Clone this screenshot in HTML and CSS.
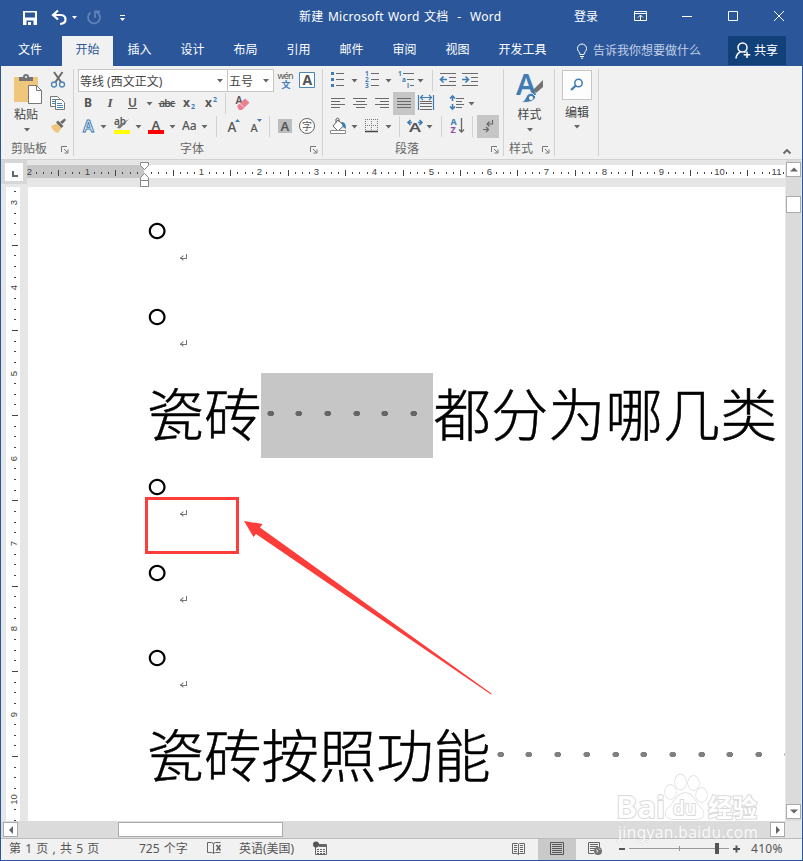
FILE: index.html
```html
<!DOCTYPE html>
<html lang="zh-CN">
<head>
    <meta charset="UTF-8">
    <meta name="viewport" content="width=device-width, initial-scale=1.0">
    <title>新建 Microsoft Word 文档 - Word</title>
    <link rel="stylesheet" href="styles.css">
</head>
<body>
<div class="window">

    <!-- Title bar -->
    <header class="titlebar">
        <svg class="quick" viewBox="1 0 140 36" width="140" height="36">
            <path d="M23 11h14v14H23z" fill="#fff"/>
            <path d="M25 12.500h10v5H25z M26.500 20.500h7V25h-7z" fill="#2b579a"/>
            <path d="M28 22h3v3h-3z" fill="#fff"/>
            <path d="M58 10.500l-5 4.500 5 4.500M53.500 15h7.500q4.500 .5 4.500 4.500t-5.500 4.500" fill="none" stroke="#fff" stroke-width="2.200"/>
            <path d="M72 16h5l-2.500 3z" fill="#fff"/>
            <path d="M90.500 12.500a6 6 0 1 0 5.500-.8M95 18v-6.500h5" fill="none" stroke="#5f82b8" stroke-width="1.800"/>
            <path d="M120 15.500h5" stroke="#fff"/>
            <path d="M120 18h5l-2.500 3z" fill="#fff"/>
        </svg>
        <h1 class="title">新建 Microsoft Word 文档&nbsp; -&nbsp; Word</h1>
        <span class="login">登录</span>
        <svg class="winbtns" viewBox="622 0 180 36" width="180" height="36" fill="none" stroke="#fff">
            <path d="M634.500 11.500h12v9h-12zM634.500 13.500h12M640.500 20v-5M638 17.500l2.500-2.500 2.500 2.500"/>
            <path d="M682 16.500h10"/>
            <path d="M728.500 11.500h9v9h-9z"/>
            <path d="M774 11l10 10M784 11l-10 10"/>
        </svg>
    </header>

    <!-- Ribbon tabs -->
    <nav class="tabs">
        <span class="tab file">文件</span>
        <span class="tab active">开始</span>
        <span class="tab">插入</span>
        <span class="tab">设计</span>
        <span class="tab">布局</span>
        <span class="tab">引用</span>
        <span class="tab">邮件</span>
        <span class="tab">审阅</span>
        <span class="tab">视图</span>
        <span class="tab wide">开发工具</span>
        <span class="tellme">
            <svg viewBox="0 0 12 16" width="12" height="16" fill="none" stroke="#fff"><path d="M4 11.500C4 9 1.500 8.500 1.500 5.500a4.500 4.500 0 0 1 9 0C10.500 8.500 8 9 8 11.500zM4 13.500h4M5 15.200h2"/></svg>
            告诉我你想要做什么
        </span>
        <span class="share">
            <svg viewBox="0 0 16 17" width="16" height="17" fill="none" stroke="#fff" stroke-width="1.500"><circle cx="7.500" cy="5.500" r="4.500"/><path d="M1 16.500q.5-5 4.500-6.500M9.500 10l1 .7M12 9.500v6.500M8.700 12.700h6.600"/></svg>
            共享
        </span>
    </nav>

    <!-- Ribbon -->
    <section class="ribbon">
        <div class="group clipboard">
            <div class="tools">
                <div class="big">
                    <svg viewBox="5 69 43 36" width="43" height="36">
                        <path d="M14 77h24v25H14z" fill="#eec77d"/>
                        <path d="M19 81v-4h4q0-3 3-3t3 3h4v4z" fill="#737373"/><circle cx="26" cy="77" r="1" fill="#fff"/>
                        <path d="M28.500 85.500h8l5 5v13h-13z" fill="#fff" stroke="#777"/><path d="M36.500 85.500v5h5" fill="none" stroke="#777"/>
                    </svg>
                    <span>粘贴</span>
                    <svg viewBox="0 0 6 4" width="6" height="4"><path class="arr" d="M0 0h6l-3 3.500z"/></svg>
                </div>
                <div class="col">
                    <svg viewBox="48 69 20 23" width="20" height="23" fill="none">
                        <path d="M54 72l7 10M62.500 72l-7 10" stroke="#6a6a6a" stroke-width="2"/>
                        <circle cx="54" cy="84.500" r="2.500" stroke="#4c85b8" stroke-width="1.300"/><circle cx="62" cy="84.500" r="2.500" stroke="#4c85b8" stroke-width="1.300"/>
                    </svg>
                    <svg viewBox="48 92 20 23" width="20" height="23" fill="#fff" stroke="#777">
                        <path d="M50.500 96.500h7l2 2v8h-9z"/><path d="M52 99.500h4M52 101.500h4M52 103.500h4" stroke="#4c85b8"/>
                        <path d="M55.500 99.500h6l3 3v7h-9z"/><path d="M57 103.500h5M57 105.500h6M57 107.500h6" stroke="#4c85b8"/>
                    </svg>
                    <svg viewBox="48 115 20 23" width="20" height="23">
                        <path d="M51 126l6-2.500 4.500 4.500-3.500 5q-5-1-7-7z" fill="#eec77d"/>
                        <path d="M56 122.500l2-2 5.500 5.500-2 2zM60 122l4.500-3.500 1.500 1.500-3.500 4z" fill="#6a6a6a"/>
                    </svg>
                </div>
            </div>
            <div class="caption"><span>剪贴板</span><svg class="launch" viewBox="0 0 8 8"><path d="M.5 6V.500H6M3 3l3.500 3.500M7 3.500V7H3.500"/></svg></div>
        </div>

        <div class="group font">
            <div class="tools rows">
                <div class="row">
                    <span class="combo name">等线 (西文正文)<svg viewBox="0 0 6 4" width="6" height="4"><path class="arr" d="M0 0h6l-3 3.500z"/></svg></span>
                    <span class="combo size">五号<svg viewBox="0 0 6 4" width="6" height="4"><path class="arr" d="M0 0h6l-3 3.500z"/></svg></span>
                    <svg viewBox="274 69 48 23" width="48" height="23">
                        <text x="277.500" y="79" font-size="9" textLength="16" class="dk">wén</text>
                        <text x="281.500" y="87.500" font-size="9" font-weight="700" fill="#3f7cb4">文</text>
                        <path d="M299.500 72.500h15v15h-15z" fill="#fff" stroke="#4c85b8"/>
                        <text x="302.500" y="85" font-size="14" font-weight="700" class="dk">A</text>
                    </svg>
                </div>
                <div class="row">
                    <svg viewBox="78 92 80 23" width="80" height="23">
                        <text x="84" y="107" font-size="12" font-weight="700" class="dk">B</text>
                        <text x="107.500" y="107" font-size="13" font-style="italic" font-weight="700" class="dk serif">I</text>
                        <text x="128" y="107" font-size="12" font-weight="600" class="dk">U</text><path d="M128 108.500h9" stroke="#555"/>
                        <path class="arr" d="M146.500 102h6l-3 3.500z"/>
                    </svg>
                    <svg viewBox="158 92 66 23" width="66" height="23">
                        <text x="159" y="107" font-size="10.500" font-weight="600" textLength="16" class="dk">abc</text><path d="M158.500 103.500h17" stroke="#555"/>
                        <text x="183" y="107" font-size="12" font-weight="700" class="dk">x</text><text x="191" y="109" font-size="7" font-weight="700" fill="#3f7cb4">2</text>
                        <text x="205" y="107" font-size="12" font-weight="700" class="dk">x</text><text x="213" y="102" font-size="7" font-weight="700" fill="#3f7cb4">2</text>
                    </svg>
                    <i class="sep"></i>
                    <svg viewBox="227 92 30 23" width="30" height="23">
                        <text x="235.500" y="104" font-size="10.500" font-weight="600" class="dk">A</text>
                        <path d="M237 106l8-7.500 4.500 4-7.500 7.500h-3z" fill="#e8808e"/><path d="M239.500 103l4.500 4.500" stroke="#f8d5da"/>
                    </svg>
                </div>
                <div class="row">
                    <svg viewBox="78 115 137 23" width="137" height="23">
                        <text x="83" y="131.500" font-size="16" font-weight="600" fill="#fff" stroke="#3f7cb4" stroke-width="1">A</text>
                        <path class="arr" d="M100.500 125h6l-3 3.500z"/>
                        <text x="114" y="125" font-size="10" font-weight="600" class="dk">ab</text>
                        <path d="M129 119l-9 9.500-3-.5 1.500-2.500z" fill="#777"/><path d="M114 130h16v4h-16z" fill="#ff0"/>
                        <path class="arr" d="M135.500 125h6l-3 3.500z"/>
                        <text x="151.500" y="129.500" font-size="13" font-weight="600" class="dk">A</text><path d="M148 130h16v4h-16z" fill="red"/>
                        <path class="arr" d="M169.500 125h6l-3 3.500z"/>
                        <text x="182" y="130" font-size="12" font-weight="500" class="dk">Aa</text>
                        <path class="arr" d="M201.500 125h6l-3 3.500z"/>
                    </svg>
                    <i class="sep"></i>
                    <svg viewBox="218 115 50 23" width="50" height="23">
                        <text x="227.500" y="132" font-size="13.500" font-weight="500" class="dk">A</text><path d="M235 122h5l-2.500-3z" fill="#3f7cb4"/>
                        <text x="250.500" y="132" font-size="11" font-weight="500" class="dk">A</text><path d="M257 119h5l-2.500 3z" fill="#3f7cb4"/>
                    </svg>
                    <i class="sep"></i>
                    <svg viewBox="271 115 50 23" width="50" height="23">
                        <path d="M278 119h14v14h-14z" fill="#bdbdbd"/>
                        <text x="280.500" y="131" font-size="13" font-weight="600" class="dk">A</text>
                        <circle cx="307" cy="126" r="7.500" fill="#fff" stroke="#666"/>
                        <text x="302" y="130" font-size="10" class="dk">字</text>
                    </svg>
                </div>
            </div>
            <div class="caption"><span>字体</span><svg class="launch" viewBox="0 0 8 8"><path d="M.5 6V.500H6M3 3l3.500 3.500M7 3.500V7H3.500"/></svg></div>
        </div>

        <div class="group para">
            <div class="tools rows">
                <div class="row">
                    <svg viewBox="327 69 104 23" width="104" height="23">
                        <path d="M331 72h3v3h-3zM331 78h3v3h-3zM331 84h3v3h-3z" fill="#3f7cb4"/>
                        <path class="ln" d="M336 73.500h8M336 79.500h8M336 85.500h8"/>
                        <path class="arr" d="M351.500 79h6l-3 3.500z"/>
                        <g font-size="6.500" font-weight="700" fill="#3f7cb4"><text x="365" y="76">1</text><text x="365" y="82">2</text><text x="365" y="88">3</text></g>
                        <path class="ln" d="M371 73.500h8M371 79.500h8M371 85.500h8"/>
                        <path class="arr" d="M385.500 79h6l-3 3.500z"/>
                        <g font-size="6.500" font-weight="700" fill="#3f7cb4"><text x="398" y="76">1</text><text x="402" y="82">a</text><text x="407" y="88">i</text></g>
                        <path class="ln" d="M403 73.500h11M407 79.500h7M410 85.500h4"/>
                        <path class="arr" d="M417.500 79h6l-3 3.500z"/>
                    </svg>
                    <i class="sep"></i>
                    <svg viewBox="434 69 50 23" width="50" height="23">
                        <path class="ln" d="M440 73.500h16M449 77.500h7M449 81.500h7M440 85.500h16M462 73.500h16M471 77.500h7M471 81.500h7M462 85.500h16"/>
                        <path class="bl" d="M447 79.500h-6M443.500 76.500l-3 3 3 3M462 79.500h6M465.500 76.500l3 3-3 3"/>
                    </svg>
                </div>
                <div class="row">
                    <svg viewBox="327 92 66 23" width="66" height="23">
                        <path class="ln" d="M331 98.500h14M331 101.500h9M331 104.500h14M331 107.500h9M353 98.500h14M356 101.500h9M353 104.500h14M356 107.500h9M375 98.500h14M380 101.500h9M375 104.500h14M380 107.500h9"/>
                    </svg>
                    <svg class="on" viewBox="393 92 22 23" width="22" height="23"><path class="ln" d="M397 98.500h14M397 101.500h14M397 104.500h14M397 107.500h14"/></svg>
                    <svg viewBox="415 92 66 23" width="66" height="23">
                        <path class="bl thin" d="M418.500 95v15M433.500 95v15M420 97.500h12M423 95l-2.500 2.500 2.500 2.500M429 95l2.500 2.500-2.500 2.500"/>
                        <path class="ln" d="M420 101.500h12M420 103.500h12M420 106.500h12M420 109.500h12"/>
                        <path class="bl" d="M452.500 96v5M452.500 104v5M450 98.500l2.500-2.500 2.500 2.500M450 106.500l2.500 2.500 2.500-2.500"/>
                        <path class="ln" d="M456 98.500h8M456 101.500h6M456 104.500h8M456 107.500h6"/>
                        <path class="arr" d="M468.500 102h6l-3 3.500z"/>
                    </svg>
                </div>
                <div class="row">
                    <svg viewBox="327 115 71 23" width="71" height="23">
                        <path d="M333 126l5-6 6 5.500-6 5.500z" fill="#fff" stroke="#666"/><path d="M336 123v-4q2-2 3 0v3" fill="none" stroke="#666"/>
                        <path d="M341 122q5-1 5 7l-3-2z" fill="#3f7cb4"/><path d="M330.500 130.500h15v3h-15z" fill="#fff" stroke="#888"/>
                        <path class="arr" d="M351.500 125h6l-3 3.500z"/>
                        <path d="M365.500 119v12M371.500 119v12M377.500 119v12M365 119.500h13M365 125.500h13" stroke="#777" stroke-dasharray="1 1"/><path d="M365 131.500h13" stroke="#444" stroke-width="1.500"/>
                        <path class="arr" d="M385.500 125h6l-3 3.500z"/>
                    </svg>
                    <i class="sep"></i>
                    <svg viewBox="401 115 39 23" width="39" height="23">
                        <text x="409" y="132" font-size="13" font-weight="600" textLength="12" lengthAdjust="spacingAndGlyphs" class="dk">A</text>
                        <path class="bl" d="M412 122.500h-4M410.500 120l-2.500 2.500 2.500 2.500M418 122.500h4M419.500 120l2.500 2.500-2.500 2.500"/>
                        <path class="arr" d="M426.500 125h6l-3 3.500z"/>
                    </svg>
                    <i class="sep"></i>
                    <svg viewBox="443 115 28 23" width="28" height="23">
                        <text x="450.500" y="125" font-size="9" font-weight="700" fill="#3f7cb4">A</text>
                        <text x="450.500" y="133" font-size="9" font-weight="700" fill="#8e4ba8">Z</text>
                        <path d="M461.500 118v14M459 129.500l2.500 2.500 2.500-2.500" fill="none" stroke="#666" stroke-width="1.300"/>
                    </svg>
                    <i class="sep"></i>
                    <svg class="on" viewBox="477 115 22 23" width="22" height="23"><path d="M492.500 120v4h-5M489.500 121.500l-2.500 2.500 2.500 2.500M483 129.500h5M486 127l2.500 2.500-2.500 2.500" fill="none" stroke="#666" stroke-width="1.200"/></svg>
                </div>
            </div>
            <div class="caption"><span>段落</span><svg class="launch" viewBox="0 0 8 8"><path d="M.5 6V.500H6M3 3l3.500 3.500M7 3.500V7H3.500"/></svg></div>
        </div>

        <div class="group styles">
            <div class="tools">
                <div class="big">
                    <svg viewBox="508 69 43 36" width="43" height="36">
                        <text x="516" y="95" font-size="29" font-weight="600" fill="#3f7cb4" textLength="20" lengthAdjust="spacingAndGlyphs">A</text>
                        <path d="M543 80v7l-7 6-3-3z" fill="#737373"/><path d="M521 102q4-1 5-5t6-4l4 4q-3 7-15 5z" fill="#3f7cb4" stroke="#f1f1f1"/><circle cx="531" cy="98" r="2" fill="#fff"/>
                    </svg>
                    <span>样式</span>
                    <svg viewBox="0 0 6 4" width="6" height="4"><path class="arr" d="M0 0h6l-3 3.500z"/></svg>
                </div>
            </div>
            <div class="caption"><span>样式</span><svg class="launch" viewBox="0 0 8 8"><path d="M.5 6V.500H6M3 3l3.500 3.500M7 3.500V7H3.500"/></svg></div>
        </div>

        <div class="group edit">
            <div class="big">
                <span class="editbox"><svg viewBox="0 0 14 14" width="14" height="14" fill="none" stroke="#3f7cb4"><circle cx="8.500" cy="5" r="3.700" stroke-width="1.500"/><path d="M6 7.500l-5 4.500" stroke-width="2.300"/></svg></span>
                <span>编辑</span>
                <svg viewBox="0 0 6 4" width="6" height="4"><path class="arr" d="M0 0h6l-3 3.500z"/></svg>
            </div>
        </div>
        <svg class="collapse" viewBox="0 0 10 7" width="10" height="7"><path d="M1.500 5.500L5 2l3.500 3.500" fill="none" stroke="#666" stroke-width="1.800"/></svg>
    </section>

    <!-- Document area -->
    <main class="work">
        <div class="left">
            <div class="top">
                <div class="corner"><span class="tabstop"></span></div>
                <svg id="hruler" viewBox="27 160 758 27" width="758" height="27"></svg>
            </div>
            <div class="middle">
                <svg id="vruler" viewBox="1 187 27 634" width="27" height="634"></svg>
                <article class="page">
                    <p class="line stop">。<i class="ret"></i></p>
                    <p class="line stop">。<i class="ret"></i></p>
                    <p class="line">瓷砖<span class="sel"><i class="sp"></i><i class="sp"></i><i class="sp"></i><i class="sp"></i><i class="sp"></i><i class="sp"></i></span><span class="after">都分为哪几类</span></p>
                    <p class="line stop">。<i class="ret"></i></p>
                    <p class="line stop">。<i class="ret"></i></p>
                    <p class="line stop">。<i class="ret"></i></p>
                    <p class="line">瓷砖按照功能<i class="sp"></i><i class="sp"></i><i class="sp"></i><i class="sp"></i><i class="sp"></i><i class="sp"></i><i class="sp"></i><i class="sp"></i><i class="sp"></i><i class="sp"></i><i class="sp"></i></p>
                </article>
            </div>
            <div class="hscroll">
                <span class="sbtn"><svg viewBox="0 0 6 8" width="6" height="8"><path d="M5 0v8L1 4z" fill="#666"/></svg></span>
                <span class="hthumb"></span>
                <span class="sbtn"><svg viewBox="0 0 6 8" width="6" height="8"><path d="M1 0v8l4-4z" fill="#666"/></svg></span>
            </div>
        </div>
        <div class="vscroll">
            <span class="sbtn"><svg viewBox="0 0 8 5" width="8" height="5"><path d="M0 4.500h8L4 .5z" fill="#666"/></svg></span>
            <span class="vthumb"></span>
            <span class="sbtn"><svg viewBox="0 0 8 5" width="8" height="5"><path d="M0 .5h8L4 4.500z" fill="#666"/></svg></span>
        </div>
    </main>

    <!-- Status bar -->
    <footer class="status">
        <span class="pages">第 1 页 , 共 5 页</span>
        <span class="words">725 个字</span>
        <svg viewBox="204 839 35 21" width="35" height="21" fill="none" stroke="#666">
            <path d="M207.500 842.500h4q2 0 2 2v9q-1-1-2-1h-4zM213.500 844.500q0-2 2-2h5M213.500 853.500q1-1 2-1h5"/><path d="M216.500 845l4 5.500M220.500 845l-4 5.500" stroke-width="1.600"/>
        </svg>
        <span class="lang">英语(美国)</span>
        <svg viewBox="311 839 22 21" width="22" height="21">
            <path d="M316.500 844.500h11v10h-11z" fill="#f1f1f1" stroke="#666"/><circle cx="317" cy="844.500" r="3" fill="#555"/><path d="M320 845h7v2h-7z" fill="#666"/>
            <path d="M318 849.500h8M318 851.500h8M318 853.500h8" stroke="#666" stroke-dasharray="2 1"/>
        </svg>
        <div class="right">
            <svg viewBox="504 839 34 21" width="34" height="21" fill="none" stroke="#666">
                <path d="M512.500 843.500h5l1 1 1-1h5v10h-5l-1 1-1-1h-5zM518.500 844v11M514 845.500h3M514 847.500h3M514 849.500h3M514 851.500h3M520 845.500h3M520 847.500h3M520 849.500h3M520 851.500h3"/>
            </svg>
            <svg class="view-on" viewBox="538 839 38 21" width="38" height="21" fill="none" stroke="#555"><path d="M550.500 842.500h13v12h-13zM552 844.500h10M552 846.500h10M552 848.500h10M552 850.500h10M552 852.500h10"/></svg>
            <svg viewBox="576 839 174 21" width="174" height="21">
                <path d="M594 853.500h-5.500v-11h11v5M590 844.500h8M590 846.500h8M590 848.500h5M590 850.500h4" fill="none" stroke="#666"/>
                <circle cx="598" cy="851" r="4" fill="#707070"/><path d="M596 849.500l2 1.500-1 1.500M599 848.500l1.500 1.500" stroke="#eee" fill="none"/>
                <path d="M619 848h6v2h-6zM733 848h7v2h-7zM735.500 845.500h2v7h-2z" fill="#555"/>
                <path d="M629 848.500h100M679.500 846v5" stroke="#999"/>
                <path d="M715 843h4v11h-4z" fill="#555"/>
            </svg>
            <span class="zoom">410%</span>
        </div>
    </footer>

    <!-- Callout drawn over the page -->
    <svg class="callout" viewBox="140 490 360 210" width="360" height="210">
        <path d="M146.500 498.500h91v54h-91z" fill="none" stroke="#fc3d39" stroke-width="3"/>
        <path d="M244 521l18.500 3-2.500 3.500 231.500 166-.5 1L256 534l-2.500 3z" fill="#fc3d39"/>
    </svg>

    <svg class="watermark" viewBox="610 770 160 75" width="160" height="75" fill="#fff" stroke="#d4d4d4">
        <g paint-order="stroke" stroke-width="2">
            <g stroke-width="1.300">
                <ellipse cx="670.500" cy="792" rx="5.500" ry="7"/><ellipse cx="680.500" cy="782" rx="5.500" ry="7.500"/>
                <ellipse cx="693.500" cy="783" rx="5.500" ry="7"/><ellipse cx="701.500" cy="795" rx="5.500" ry="7"/>
                <path d="M685 793q6 0 10 7t7 9q5 9-5 10h-24q-11-1-6-10 4-3 8-9t10-7z"/>
            </g>
            <text x="616" y="818" font-size="31" font-weight="600" textLength="49" lengthAdjust="spacingAndGlyphs">Bai</text>
            <text x="673" y="815" font-size="19" font-weight="600" textLength="23" lengthAdjust="spacingAndGlyphs">du</text>
            <text x="708" y="817" font-size="25" font-weight="600" textLength="49" lengthAdjust="spacingAndGlyphs">经验</text>
        </g>
        <text x="618" y="838" font-size="15.500" textLength="140" paint-order="stroke" stroke-width="1">jingyan.baidu.com</text>
    </svg>
</div>

<script>
    const hruler = document.getElementById('hruler');
    const vruler = document.getElementById('vruler');

    // Horizontal ruler: grey margin up to the indent, eight ticks per unit
    function drawHorizontal() {
        const zero = 144, unit = 57.45;
        let out = '<path d="M27 165h117v13H27z" fill="#c6c6c6"/><path d="M144 165h641v13H144z" fill="#fff"/>';
        for (let i = -16; i <= 89; i++) {
            const x = Math.round(zero + i * unit / 8);
            if (i === 0) continue;
            if (i % 8 === 0) {
                out += `<text x="${x + 0.5}" y="175" text-anchor="middle">${Math.abs(i / 8)}</text>`;
            } else if (i % 4 === 0) {
                out += `<path d="M${x} 170h1v6h-1z"/>`;
            } else {
                out += `<path d="M${x} 172h1v2h-1z"/>`;
            }
        }
        out += '<g fill="#fff" stroke="#888"><path d="M140.500 162.500h8v3l-4 4-4-4zM144.500 173.500l4 4v3h-8v-3zM140.500 180.500h8v6h-8z"/></g>';
        hruler.innerHTML = out;
    }

    // Vertical ruler
    function drawVertical() {
        const three = 202, unit = 85.25;
        let out = '<path d="M6 187h14v634H6z" fill="#fff"/>';
        for (let i = -1; i <= 58; i++) {
            const y = Math.round(three + i * unit / 8);
            if (i % 8 === 0) {
                out += `<text transform="translate(17 ${y + 0.5}) rotate(-90)" text-anchor="middle">${3 + i / 8}</text>`;
            } else if (i % 4 === 0) {
                out += `<path d="M12 ${y}h6v1h-6z"/>`;
            } else {
                out += `<path d="M14 ${y}h2v1h-2z"/>`;
            }
        }
        vruler.innerHTML = out;
    }

    drawHorizontal();
    drawVertical();
</script>
</body>
</html>
```

FILE: styles.css
```css
* {
    box-sizing: border-box;
}

body {
    margin: 0;
    font-family: "Noto Sans", "Noto Sans CJK SC", sans-serif;
    font-size: 12px;
    color: #444;
}

svg {
    display: block;
    flex: none;
}

.window {
    position: relative;
    width: 803px;
    height: 861px;
    border: 1px solid #2b579a;
    border-top: 0;
    background: #e6e6e6;
    overflow: hidden;
    display: flex;
    flex-direction: column;
}

/* Title bar */
.titlebar {
    display: flex;
    height: 36px;
    background: #2b579a;
    color: #fff;
    line-height: 33px;
}

.title {
    width: 433px;
    margin: 0;
    padding-left: 158px;
    font-size: 12px;
    font-weight: 400;
    letter-spacing: 0.3px;
    word-spacing: 0.9px;
    white-space: nowrap;
}

.login {
    width: 48px;
    line-height: 33px;
}

/* Tabs */
.tabs {
    display: flex;
    height: 30px;
    background: #2b579a;
    color: #fff;
    line-height: 28px;
}

.tab {
    width: 53px;
    text-align: center;
}

.tab.file {
    width: 61px;
    padding-right: 3px;
}

.tab.active {
    width: 51px;
    background: #f1f1f1;
    color: #2b579a;
}

.tab.wide {
    width: 72px;
    padding-left: 5px;
}

.tellme {
    display: flex;
    align-items: center;
    gap: 5px;
    width: 158px;
    padding-left: 20px;
    color: #c3d0e6;
    white-space: nowrap;
}

.share {
    display: flex;
    align-items: center;
    gap: 3px;
    width: 58px;
    height: 29px;
    margin-left: auto;
    margin-right: 16px;
    padding-left: 7px;
    background: #124078;
}

/* Ribbon */
.ribbon {
    display: flex;
    height: 94px;
    padding-top: 3px;
    background: #f1f1f1;
    border-bottom: 1px solid #d2d2d2;
}

.group {
    position: relative;
    display: flex;
    flex-direction: column;
    height: 87px;
    border-right: 1px solid #d2d2d2;
}

.clipboard { width: 73px; }
.font { width: 249px; }
.para { width: 181px; }
.styles { width: 51px; }
.edit { width: 44px; }

.tools {
    display: flex;
    flex: none;
    height: 69px;
}

.tools.rows {
    flex-direction: column;
    padding-left: 4px;
}

.row {
    display: flex;
    height: 23px;
}

.big {
    display: flex;
    flex-direction: column;
    align-items: center;
    width: 43px;
    margin-left: 4px;
}

.clipboard .big span {
    margin-left: -1px;
}

.big span {
    line-height: 20px;
    margin-bottom: 3px;
}

.styles .big {
    margin-left: 4px;
}

.edit .big {
    width: 34px;
    margin-left: 5px;
}

.edit .big span {
    line-height: 18px;
}

.big .editbox {
    display: flex;
    align-items: center;
    justify-content: center;
    width: 30px;
    height: 30px;
    margin: 1px 0 4px -1px;
    border: 1px solid #c6c6c6;
    background: #fdfdfd;
}

.caption {
    display: flex;
    align-items: center;
    justify-content: space-between;
    height: 18px;
    padding-top: 4px;
    line-height: 18px;
    color: #666;
}

.caption span {
    flex: 1;
    text-align: center;
}

.launch {
    width: 8px;
    height: 8px;
    margin: 2px 4px 0 0;
    fill: none;
    stroke: #777;
}

.clipboard .caption span {
    padding-right: 4px;
}

.styles .caption span {
    padding-right: 4px;
}

.sep {
    width: 1px;
    height: 21px;
    margin: 1px;
    background: #d2d2d2;
}

.row .on {
    background: #c6c6c6;
}

.row .sep + .on {
    margin-left: 3px;
}

.combo {
    display: flex;
    align-items: center;
    justify-content: space-between;
    height: 23px;
    padding: 0 4px 0 1px;
    border: 1px solid #c6c6c6;
    background: #fff;
    white-space: nowrap;
}

.combo.name { width: 150px; margin-right: -1px; }
.combo.size { width: 47px; }

.collapse {
    margin: 79px 10px 0 auto;
}

.arr { fill: #666; }
.dk { fill: #555; }
.serif { font-family: "Liberation Serif", serif; }
.ln { stroke: #6a6a6a; fill: none; }
.bl { stroke: #3f7cb4; stroke-width: 1.6; fill: none; }
.bl.thin { stroke-width: 1.2; }

/* Document area */
.work {
    display: flex;
    height: 678px;
}

.left {
    width: 784px;
}

.top,
.middle {
    display: flex;
}

.corner {
    width: 26px;
    height: 24px;
    padding: 3px 0 0 4px;
    background: #d6d6d6;
}

.tabstop {
    display: block;
    width: 18px;
    height: 18px;
    background: #fdfdfd;
}

.tabstop::after {
    content: "";
    display: block;
    width: 4px;
    height: 4px;
    border-left: 2px solid #666;
    border-bottom: 2px solid #666;
    transform: translate(7px, 8px);
}

#hruler,
#vruler {
    font: 9.5px "Liberation Sans", sans-serif;
    fill: #444;
}

.page {
    width: 757px;
    height: 634px;
    padding: 15.3px 0 0 119px;
    background: #fff;
    overflow: hidden;
}

.line {
    display: flex;
    height: 85.33px;
    margin: 0;
    font-family: "Noto Sans CJK SC", sans-serif;
    font-size: 57.3px;
    font-weight: 300;
    line-height: 77px;
    color: #000;
    white-space: nowrap;
    -webkit-text-stroke: 0.5px #000;
}

.line.stop {
    margin-left: -1px;
    margin-right: 1px;
    line-height: 20px;
    -webkit-text-stroke: 0;
}

.sel {
    display: flex;
    background: #c6c6c6;
    width: 172px;
    margin-left: -1px;
}

.after {
    margin-left: 1px;
}

/* Space marks */
.sp {
    flex: none;
    width: 28.7px;
    height: 85px;
    background: radial-gradient(ellipse 3.7px 3px at 9.8px 40.5px, #666 85%, transparent 100%);
}

.line > .sp {
    background: radial-gradient(ellipse 3.7px 3px at 9.8px 40.5px, #808080 85%, transparent 100%);
}

/* Paragraph mark */
.ret {
    width: 7px;
    height: 5px;
    margin: 52px 0 0 -23px;
    border-right: 1px solid #777;
    border-bottom: 1px solid #777;
}

.ret::before {
    content: "";
    display: block;
    width: 3px;
    height: 3px;
    border-left: 1px solid #777;
    border-bottom: 1px solid #777;
    transform: translate(1px, 2px) rotate(45deg);
}

/* Scroll bars */
.sbtn,
.hthumb,
.vthumb {
    display: flex;
    align-items: center;
    justify-content: center;
    width: 15px;
    height: 15px;
    border: 1px solid #ababab;
    background: #fff;
}

.hscroll {
    display: flex;
    height: 17px;
    padding: 1px 0 0 2px;
    background: #dbdbdb;
}

.hthumb {
    width: 165px;
    margin: 0 auto 0 100px;
}

.vscroll {
    width: 15px;
    height: 661px;
    margin-left: 1px;
    padding: 2px 0;
    background: #dbdbdb;
    display: flex;
    flex-direction: column;
}

.vthumb {
    height: 17px;
    margin: 19px 0 auto;
}

/* Status bar */
.status {
    display: flex;
    height: 22px;
    border-top: 1px solid #bcbcbc;
    background: #f1f1f1;
    line-height: 20px;
    white-space: nowrap;
    color: #555;
}

.pages {
    width: 138px;
    padding-left: 8px;
    word-spacing: 1.1px;
}

.words {
    width: 65px;
    word-spacing: 1px;
}

.lang { width: 71px; }

.right {
    display: flex;
    margin-left: auto;
}

.view-on {
    background: #c9c9c9;
}

.zoom {
    width: 52px;
    padding-left: 1px;
    letter-spacing: 0.3px;
}

.callout {
    position: absolute;
    left: 139px;
    top: 490px;
}

.watermark {
    position: absolute;
    left: 609px;
    top: 770px;
    opacity: 0.85;
}
```
